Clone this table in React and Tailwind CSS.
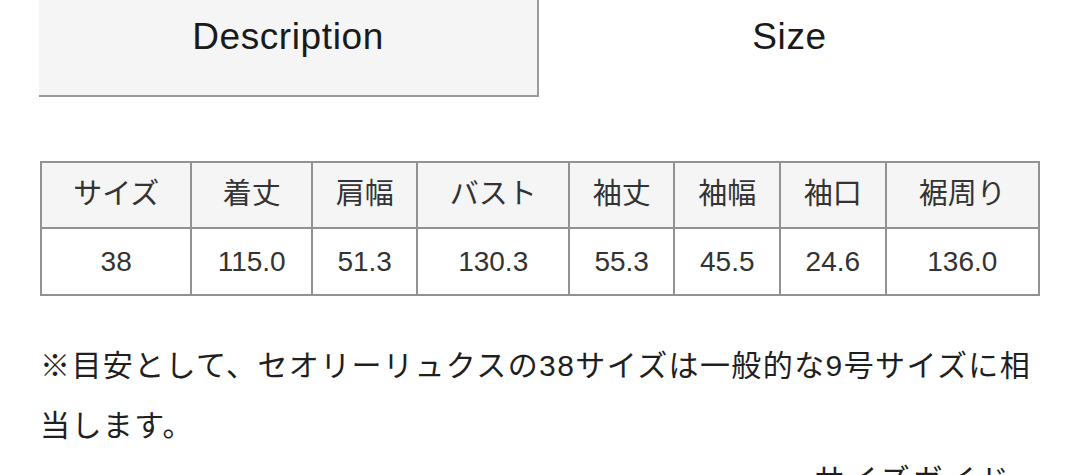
import React from 'react'

const heads = ['サイズ', '着丈', '肩幅', 'バスト', '袖丈', '袖幅', '袖口', '裾周り']
const vals = ['38', '115.0', '51.3', '130.3', '55.3', '45.5', '24.6', '136.0']
const widths = ['w-[151px]', 'w-[121px]', 'w-[106px]', 'w-[152px]', 'w-[106px]', 'w-[106px]', 'w-[106px]', 'w-[152px]']

const font = { fontFamily: '"Liberation Sans", "Noto Sans CJK JP", sans-serif' }

export default function App() {
  return (
    <div className="w-[1080px] h-[475px] overflow-hidden bg-white text-[#222]" style={font}>
      {/* tabs */}
      <div className="flex pl-[39px] h-[97px]">
        <div className="w-[500px] bg-[#f5f5f5] border-r-2 border-b-2 border-[#9a9a9a] flex justify-center pt-[9px] text-[37px] tracking-[0.6px] text-[#1a1a1a]">
          Description
        </div>
        <div className="w-[501px] flex justify-center pt-[9px] text-[37px] tracking-[0.6px] text-[#1a1a1a]">
          Size
        </div>
      </div>

      {/* size table */}
      <div className="mt-[64px] ml-[40px] w-[1000px] border-2 border-[#929292] text-[#333]">
        <div className="flex h-[66px] bg-[#f5f5f5] border-b-2 border-[#929292]">
          {heads.map((h, i) => (
            <div key={h} className={`${widths[i]} ${i < 7 ? 'border-r-2 border-[#929292]' : ''} flex items-center justify-center text-[29px]`}>
              {h}
            </div>
          ))}
        </div>
        <div className="flex h-[65px]">
          {vals.map((v, i) => (
            <div key={i} className={`${widths[i]} ${i < 7 ? 'border-r-2 border-[#929292]' : ''} flex items-center justify-center text-[28px]`}>
              {v}
            </div>
          ))}
        </div>
      </div>

      {/* note */}
      <p className="mt-[40px] ml-[40px] w-[1010px] text-[30px] leading-[60px] tracking-[1.4px] text-[#1f1f1f]">
        ※目安として、セオリーリュクスの38サイズは一般的な9号サイズに相当します。
      </p>
      <div className="flex justify-end pr-[44px] -mt-[6px] text-[30px] leading-[60px] tracking-[3px] text-[#1f1f1f]">
        サイズガイド ›
      </div>
    </div>
  )
}
